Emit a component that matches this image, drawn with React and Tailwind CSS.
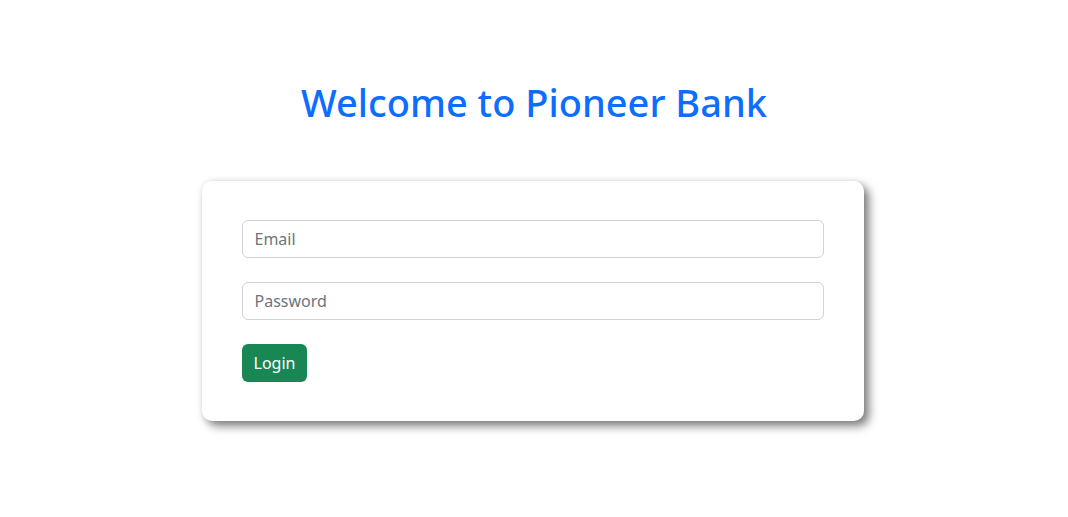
export default function App() {
  return (
    <div
      className="min-h-[517px] w-full bg-white pt-[79px]"
      style={{ fontFamily: '"Noto Sans", "Open Sans", sans-serif' }}
    >
      <h1 className="text-center text-[38px] font-medium leading-[46px] text-[#0d6efd]">
        Welcome to Pioneer Bank
      </h1>
      <div className="pr-[3px]">
        <div className="mx-auto mt-[56px] w-[662px] rounded-[10px] bg-white px-[40px] py-[39px] shadow-[5px_5px_10px_rgba(0,0,0,0.5),0_0_6px_rgba(0,0,0,0.08)]">
          <input
            type="email"
            placeholder="Email"
            className="mb-[24px] block h-[38px] w-full rounded-[6px] border border-[#ced4da] px-3 text-[16px] text-[#212529] outline-none placeholder:text-[#6c757d]"
          />
          <input
            type="password"
            placeholder="Password"
            className="mb-[24px] block h-[38px] w-full rounded-[6px] border border-[#ced4da] px-3 text-[16px] text-[#212529] outline-none placeholder:text-[#6c757d]"
          />
          <button className="h-[38px] rounded-[6px] bg-[#198754] px-3 text-[16px] text-white">
            Login
          </button>
        </div>
      </div>
    </div>
  );
}
